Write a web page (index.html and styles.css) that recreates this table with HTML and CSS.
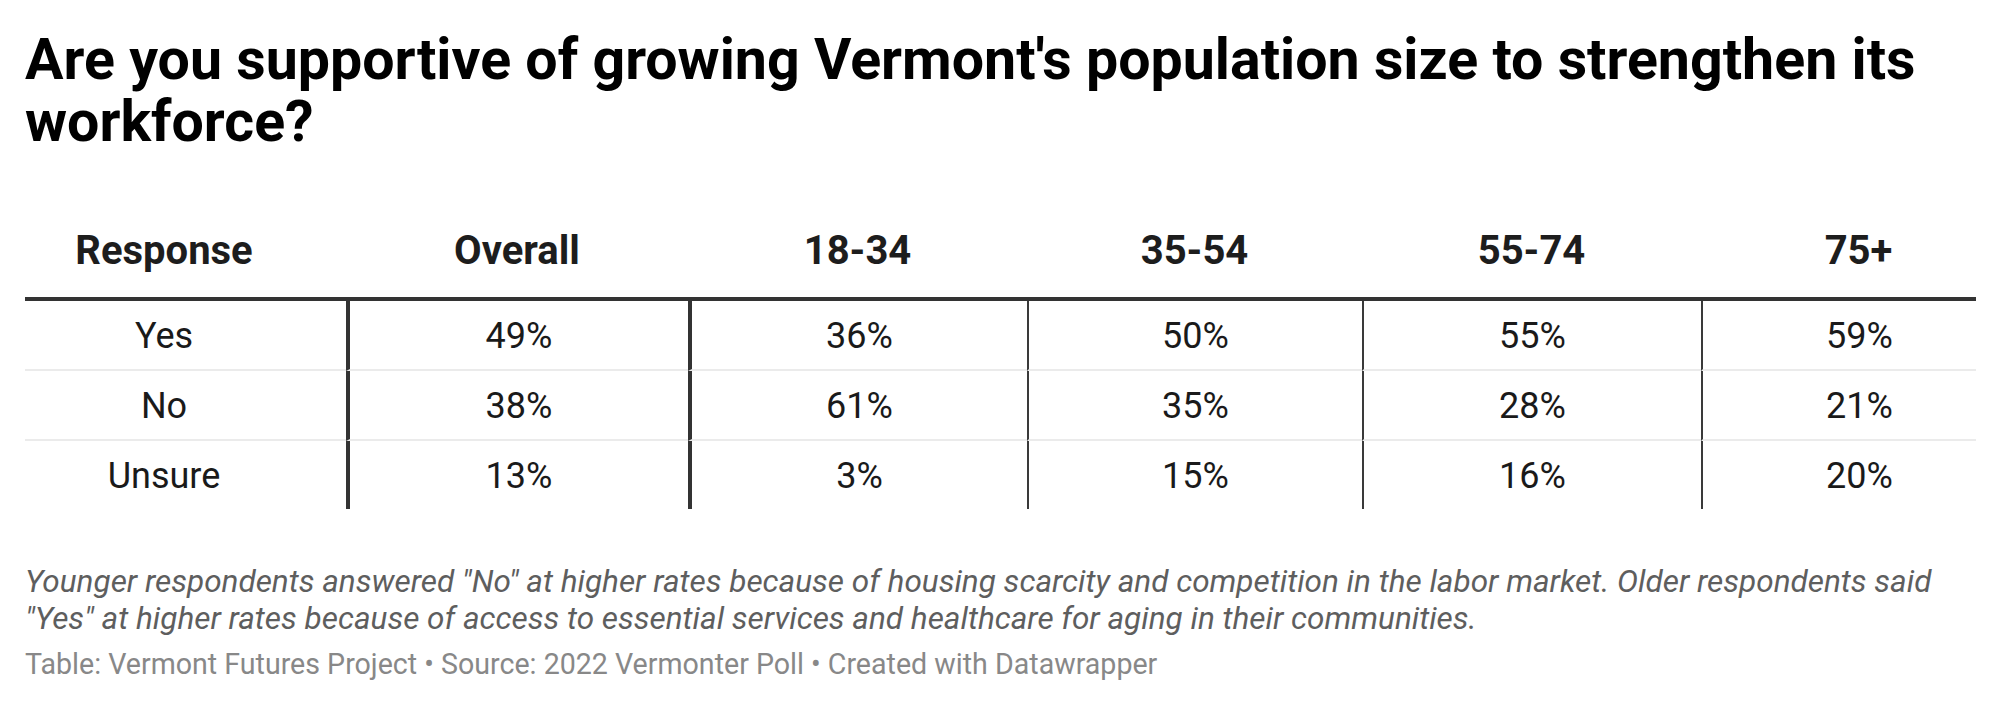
FILE: index.html
```html
<!DOCTYPE html>
<html lang="en">
<head>
<meta charset="utf-8">
<title>Vermont population poll</title>
<link rel="stylesheet" href="styles.css">
</head>
<body>
<div class="chart">
  <h1 class="title">Are you supportive of growing Vermont's population size to strengthen its workforce?</h1>
  <table class="poll">
    <colgroup>
      <col class="c-resp">
      <col class="c-overall">
      <col class="c-a1">
      <col class="c-a2">
      <col class="c-a3">
      <col class="c-a4">
    </colgroup>
    <thead>
      <tr>
        <th class="first">Response</th>
        <th>Overall</th>
        <th>18-34</th>
        <th>35-54</th>
        <th>55-74</th>
        <th class="last">75+</th>
      </tr>
    </thead>
    <tbody>
      <tr>
        <td class="first">Yes</td>
        <td class="thick">49%</td>
        <td class="thick">36%</td>
        <td class="thin">50%</td>
        <td class="thin">55%</td>
        <td class="thin last">59%</td>
      </tr>
      <tr>
        <td class="first">No</td>
        <td class="thick">38%</td>
        <td class="thick">61%</td>
        <td class="thin">35%</td>
        <td class="thin">28%</td>
        <td class="thin last">21%</td>
      </tr>
      <tr class="end">
        <td class="first">Unsure</td>
        <td class="thick">13%</td>
        <td class="thick">3%</td>
        <td class="thin">15%</td>
        <td class="thin">16%</td>
        <td class="thin last">20%</td>
      </tr>
    </tbody>
  </table>
  <p class="notes">Younger respondents answered "No" at higher rates because of housing scarcity and competition in the labor market. Older respondents said "Yes" at higher rates because of access to essential services and healthcare for aging in their communities.</p>
  <p class="source">Table: Vermont Futures Project • Source: 2022 Vermonter Poll • Created with Datawrapper</p>
</div>
</body>
</html>
```
FILE: styles.css
```css
html, body {
  margin: 0;
  padding: 0;
  background: #ffffff;
}

.chart {
  padding: 29px 26px 0 25px;
  font-family: Roboto, "Liberation Sans", Arial, sans-serif;
  color: #181818;
}

.title {
  margin: 0;
  font-size: 57.3px;
  line-height: 62px;
  font-weight: 700;
  color: #000000;
  max-width: 1951px;
}

.poll {
  margin-top: 53px;
  width: 1951px;
  table-layout: fixed;
  border-collapse: separate;
  border-spacing: 0;
}

.c-resp { width: 321px; }
.c-overall { width: 342px; }
.c-a1 { width: 339px; }
.c-a2 { width: 335px; }
.c-a3 { width: 339px; }
.c-a4 { width: 275px; }

.poll th {
  padding: 22px 0 23px 0;
  font-size: 40px;
  line-height: 46px;
  font-weight: 700;
  color: #1d1d1d;
  text-align: center;
  border-bottom: 4px solid #333333;
}

.poll td {
  padding: 2px 0 0 0;
  font-size: 36px;
  line-height: 66px;
  font-weight: 400;
  color: #1a1a1a;
  text-align: center;
  border-bottom: 2px solid #ebebeb;
}

.poll tr.end td {
  border-bottom: 0;
}

.poll .first {
  padding-right: 43px;
}

.poll .last {
  padding-left: 40px;
}

.poll td.thick {
  border-left: 4px solid #333333;
}

.poll td.thin {
  border-left: 2px solid #3a3a3a;
}

.notes {
  margin: 54px 0 0 0;
  font-size: 31.5px;
  line-height: 37px;
  font-style: italic;
  color: #5e5e5e;
  max-width: 1951px;
}

.source {
  margin: 9px 0 0 0;
  font-size: 28.6px;
  line-height: 36px;
  color: #888888;
}
```
